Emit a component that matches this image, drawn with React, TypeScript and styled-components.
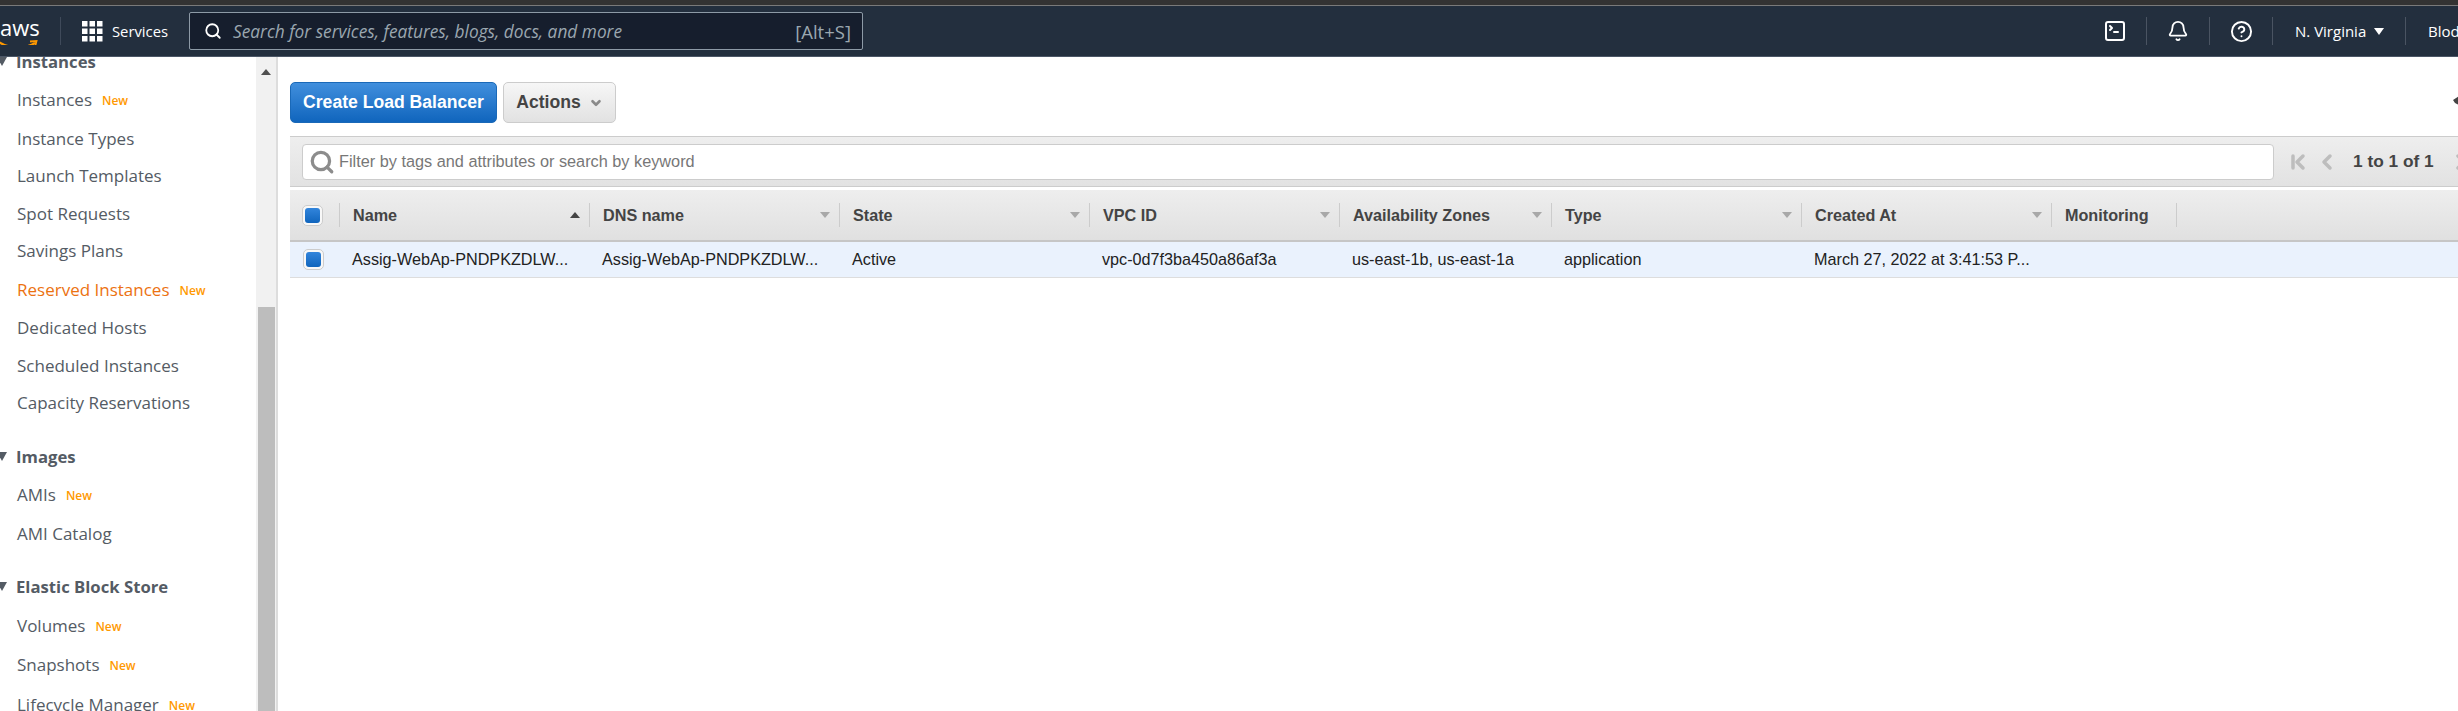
import React from 'react'
import styled, { createGlobalStyle } from 'styled-components'
import { Bell, ChevronDown, ChevronFirst, ChevronLeft, ChevronRight, CircleHelp, Search, SquareTerminal } from 'lucide-react'

const Global = createGlobalStyle`
  html, body {
    margin: 0;
    padding: 0;
    height: 711px;
    overflow: hidden;
    background: #fff;
  }
  * { box-sizing: border-box; }
`

interface INavItem {
  label: string;
  isNew?: boolean;
  active?: boolean;
}

interface INavGroup {
  title: string;
  items: INavItem[];
}

const groups: INavGroup[] = [
  {
    title: 'Instances',
    items: [
      { label: 'Instances', isNew: true },
      { label: 'Instance Types' },
      { label: 'Launch Templates' },
      { label: 'Spot Requests' },
      { label: 'Savings Plans' },
      { label: 'Reserved Instances', isNew: true, active: true },
      { label: 'Dedicated Hosts' },
      { label: 'Scheduled Instances' },
      { label: 'Capacity Reservations' },
    ],
  },
  {
    title: 'Images',
    items: [{ label: 'AMIs', isNew: true }, { label: 'AMI Catalog' }],
  },
  {
    title: 'Elastic Block Store',
    items: [
      { label: 'Volumes', isNew: true },
      { label: 'Snapshots', isNew: true },
      { label: 'Lifecycle Manager', isNew: true },
    ],
  },
]

const columns = [
  { title: 'Name', value: 'Assig-WebAp-PNDPKZDLW...', width: 250, sorted: true },
  { title: 'DNS name', value: 'Assig-WebAp-PNDPKZDLW...', width: 250 },
  { title: 'State', value: 'Active', width: 250 },
  { title: 'VPC ID', value: 'vpc-0d7f3ba450a86af3a', width: 250 },
  { title: 'Availability Zones', value: 'us-east-1b, us-east-1a', width: 212 },
  { title: 'Type', value: 'application', width: 250 },
  { title: 'Created At', value: 'March 27, 2022 at 3:41:53 P...', width: 250 },
  { title: 'Monitoring', value: '', width: 125, plain: true },
]

const GridIcon = () => (
  <svg width="21" height="21" viewBox="0 0 21 21" fill="#fff">
    {[0, 7.5, 15].map((y) =>
      [0, 7.5, 15].map((x) => <rect key={`${x}-${y}`} x={x} y={y} width="5.5" height="5.5" />)
    )}
  </svg>
)

const Swoosh = () => (
  <svg width="42" height="12" viewBox="0 0 42 12" fill="none">
    <path d="M1 2.5C11 9.5 27 10.5 38 4" stroke="#ff9900" strokeWidth="2.2" />
    <path d="M33 2.5L39.5 2L38 8" stroke="#ff9900" strokeWidth="1.8" />
  </svg>
)

const PinIcon = () => (
  <svg width="18" height="20" viewBox="0 0 18 20" fill="#444">
    <path d="M2 7L8 3L8 0L14 0L14 20L9 20L8 12L4 10Z" />
  </svg>
)

const App = () => {
  return (
    <Page>
      <Global />
      <TopStrip />
      <Nav>
        <LogoSlot>
          <LogoText>aws</LogoText>
          <SwooshWrap>
            <Swoosh />
          </SwooshWrap>
        </LogoSlot>
        <ServicesLink>
          <GridIcon />
          <span>Services</span>
        </ServicesLink>
        <SearchBox>
          <Search size={18} color="#fff" strokeWidth={2.4} />
          <SearchHint>Search for services, features, blogs, docs, and more</SearchHint>
          <SearchKey>[Alt+S]</SearchKey>
        </SearchBox>
        <NavRight>
          <NavIconCell>
            <SquareTerminal size={24} color="#fff" strokeWidth={2} />
          </NavIconCell>
          <NavIconCell>
            <Bell size={22} color="#fff" strokeWidth={2} />
          </NavIconCell>
          <NavIconCell>
            <CircleHelp size={23} color="#fff" strokeWidth={2} />
          </NavIconCell>
          <RegionCell>
            N. Virginia
            <RegionCaret />
          </RegionCell>
          <AccountCell>Blod</AccountCell>
        </NavRight>
      </Nav>
      <Body>
        <Sidebar>
          <SideList>
            {groups.map((group) => (
              <SideGroup key={group.title}>
                <SideHeading>
                  <HeadingCaret />
                  {group.title}
                </SideHeading>
                {group.items.map((item) => (
                  <SideItem key={item.label} $active={item.active} $tall={item.isNew}>
                    {item.label}
                    {item.isNew && <NewBadge>New</NewBadge>}
                  </SideItem>
                ))}
              </SideGroup>
            ))}
          </SideList>
          <ScrollTrack>
            <ScrollUp />
            <ScrollThumb />
          </ScrollTrack>
        </Sidebar>
        <Main>
          <ActionRow>
            <PrimaryButton>Create Load Balancer</PrimaryButton>
            <ActionsButton>
              Actions
              <ChevronDown size={14} color="#8a8a8a" strokeWidth={4.5} />
            </ActionsButton>
            <PinSlot>
              <PinIcon />
            </PinSlot>
          </ActionRow>
          <FilterBar>
            <FilterInput>
              <Search size={26} color="#8c8c8c" strokeWidth={3} />
              <FilterHint>Filter by tags and attributes or search by keyword</FilterHint>
            </FilterInput>
            <Pager>
              <ChevronFirst size={24} color="#bdbdbd" strokeWidth={3.5} />
              <ChevronLeft size={24} color="#bdbdbd" strokeWidth={3.5} />
              <PagerText>1 to 1 of 1</PagerText>
              <ChevronRight size={24} color="#bdbdbd" strokeWidth={3.5} />
            </Pager>
          </FilterBar>
          <TableHead>
            <CheckCell>
              <CheckBox />
            </CheckCell>
            {columns.map((col) => (
              <HeadCell key={col.title} $width={col.width}>
                {col.title}
                {!col.plain && <SortCaret $up={col.sorted} />}
              </HeadCell>
            ))}
          </TableHead>
          <TableRow>
            <CheckCell>
              <CheckBox />
            </CheckCell>
            {columns.map((col) => (
              <RowCell key={col.title} $width={col.width}>
                {col.value}
              </RowCell>
            ))}
          </TableRow>
        </Main>
      </Body>
    </Page>
  )
}

const Page = styled.div`
  width: 2458px;
  height: 711px;
  overflow: hidden;
  display: flex;
  flex-direction: column;
  font-family: 'Liberation Sans', Arial, sans-serif;
`

const TopStrip = styled.div`
  height: 6px;
  flex: none;
  background: #333;
  border-bottom: 1px solid #7a7a7a;
`

const Nav = styled.header`
  height: 51px;
  flex: none;
  display: flex;
  align-items: center;
  background: #232f3e;
  border-bottom: 1px solid #4b5666;
  font-family: 'Open Sans', sans-serif;
  color: #fff;
`

const LogoSlot = styled.div`
  width: 61px;
  height: 28px;
  flex: none;
  border-right: 1px solid #3f4a5a;
  overflow: hidden;
  position: relative;
`

const LogoText = styled.div`
  font-size: 22px;
  line-height: 22px;
  margin-top: -1px;
`

const SwooshWrap = styled.div`
  position: absolute;
  left: -3px;
  top: 17px;
`

const ServicesLink = styled.div`
  display: flex;
  align-items: center;
  gap: 9px;
  margin-left: 21px;
  width: 107px;
  font-size: 14.8px;
  flex: none;
`

const SearchBox = styled.div`
  width: 674px;
  height: 38px;
  flex: none;
  display: flex;
  align-items: center;
  padding: 0 11px 0 14px;
  background: #161e2d;
  border: 1px solid #8d9aa6;
  border-radius: 2px;
  font-size: 17.3px;
`

const SearchHint = styled.span`
  margin-left: 11px;
  font-style: italic;
  color: #9ba7b0;
  flex: 1;
`

const SearchKey = styled.span`
  color: #9ba7b0;
  font-size: 18.5px;
`

const NavRight = styled.div`
  margin-left: auto;
  display: flex;
  align-items: center;
  flex: none;
`

const NavIconCell = styled.div`
  width: 63px;
  height: 28px;
  display: flex;
  align-items: center;
  justify-content: center;
  border-right: 1px solid #4a5462;
`

const RegionCell = styled.div`
  width: 133px;
  height: 28px;
  padding-left: 22px;
  display: flex;
  align-items: center;
  gap: 8px;
  font-size: 15px;
  border-right: 1px solid #4a5462;
`

const RegionCaret = styled.span`
  width: 0;
  height: 0;
  border-left: 5px solid transparent;
  border-right: 5px solid transparent;
  border-top: 7px solid #fff;
`

const AccountCell = styled.div`
  width: 52px;
  padding-left: 22px;
  font-size: 15px;
  overflow: hidden;
  white-space: nowrap;
`

const Body = styled.div`
  flex: 1;
  display: flex;
  min-height: 0;
`

const Sidebar = styled.aside`
  width: 278px;
  flex: none;
  display: flex;
  border-right: 2px solid #ddd;
  overflow: hidden;
`

const SideList = styled.nav`
  width: 256px;
  flex: none;
  margin-top: -15px;
  font-family: 'Open Sans', sans-serif;
  font-size: 17px;
  color: #545b64;
`

const SideGroup = styled.div`
  margin-bottom: 15.5px;
`

const SideHeading = styled.div`
  height: 38px;
  display: flex;
  align-items: center;
  gap: 9px;
  margin-left: -3px;
  font-size: 16.7px;
  font-weight: 700;
`

const HeadingCaret = styled.span`
  width: 0;
  height: 0;
  border-left: 5px solid transparent;
  border-right: 5px solid transparent;
  border-top: 9px solid #545b64;
`

const SideItem = styled.div<{ $active?: boolean; $tall?: boolean }>`
  height: ${({ $tall }) => ($tall ? '39.5px' : '37.5px')};
  padding-left: 17px;
  display: flex;
  align-items: center;
  color: ${({ $active }) => ($active ? '#ec7211' : '#545b64')};
`

const NewBadge = styled.span`
  margin-left: 10px;
  margin-top: 2px;
  font-size: 12px;
  font-weight: 600;
  color: #ff9900;
`

const ScrollTrack = styled.div`
  width: 20px;
  flex: none;
  background: #f1f1f1;
  display: flex;
  flex-direction: column;
  align-items: center;
`

const ScrollUp = styled.span`
  margin-top: 12px;
  width: 0;
  height: 0;
  border-left: 5px solid transparent;
  border-right: 5px solid transparent;
  border-bottom: 6px solid #505050;
`

const ScrollThumb = styled.div`
  margin-top: 232px;
  width: 17px;
  flex: 1;
  background: #bdbdbd;
`

const Main = styled.main`
  flex: 1;
  min-width: 0;
  padding: 25px 0 0 12px;
`

const ActionRow = styled.div`
  display: flex;
  align-items: center;
  gap: 6px;
  height: 41px;
`

const PrimaryButton = styled.button`
  width: 207px;
  height: 41px;
  border: 1px solid #1a69b8;
  border-radius: 5px;
  background: linear-gradient(#418fdd, #1065bd);
  color: #fff;
  font-family: inherit;
  font-size: 17.6px;
  font-weight: 700;
  padding: 0;
`

const ActionsButton = styled.button`
  width: 113px;
  height: 41px;
  display: flex;
  align-items: center;
  justify-content: center;
  gap: 8px;
  border: 1px solid #ccc;
  border-radius: 5px;
  background: linear-gradient(#f6f6f6, #e2e2e2);
  color: #444;
  font-family: inherit;
  font-size: 17.6px;
  font-weight: 700;
  padding: 0;
`

const PinSlot = styled.div`
  margin-left: auto;
  margin-right: -11px;
  display: flex;
`

const FilterBar = styled.div`
  margin-top: 13px;
  height: 51px;
  display: flex;
  align-items: center;
  padding-left: 12px;
  border-top: 1px solid #ccc;
  border-bottom: 1px solid #ccc;
  background: linear-gradient(#eee, #e2e2e2);
`

const FilterInput = styled.div`
  width: 1972px;
  height: 36px;
  flex: none;
  display: flex;
  align-items: center;
  padding-left: 6px;
  gap: 4px;
  background: #fff;
  border: 1px solid #ccc;
  border-radius: 4px;
`

const FilterHint = styled.span`
  font-size: 16.3px;
  color: #777;
`

const Pager = styled.div`
  margin-left: 12px;
  display: flex;
  align-items: center;
  flex: none;
  gap: 5px;
`

const PagerText = styled.span`
  margin: 0 10px 0 9px;
  font-size: 17.3px;
  font-weight: 700;
  color: #444;
`

const TableHead = styled.div`
  margin-top: 3px;
  height: 52px;
  display: flex;
  align-items: center;
  border-bottom: 2px solid #c6c6c6;
  background: linear-gradient(#eee, #e0e0e0);
`

const CheckCell = styled.div`
  width: 50px;
  flex: none;
  height: 24px;
  display: flex;
  align-items: center;
  padding-left: 12px;
  border-right: 1px solid #ccc;
`

const CheckBox = styled.span`
  width: 21px;
  height: 21px;
  padding: 2px;
  border: 1px solid #ccc;
  border-radius: 5px;
  background: #f8f8f8;
  display: block;
  &::before {
    content: '';
    display: block;
    width: 100%;
    height: 100%;
    border-radius: 3px;
    background: linear-gradient(#3285dc, #1065bd);
  }
`

const HeadCell = styled.div<{ $width: number }>`
  width: ${({ $width }) => $width}px;
  flex: none;
  height: 24px;
  display: flex;
  align-items: center;
  justify-content: space-between;
  padding: 0 9px 0 13px;
  border-right: 1px solid #ccc;
  font-size: 16.2px;
  font-weight: 700;
  color: #444;
`

const SortCaret = styled.span<{ $up?: boolean }>`
  width: 0;
  height: 0;
  border-left: 5px solid transparent;
  border-right: 5px solid transparent;
  ${({ $up }) => ($up ? 'border-bottom: 6px solid #444;' : 'border-top: 6px solid #a8a8a8;')}
`

const TableRow = styled.div`
  height: 36px;
  display: flex;
  align-items: center;
  background: #eaf2fd;
  border-bottom: 1px solid #ddd;

  ${CheckCell} {
    border-right: none;
    padding-left: 13px;
  }
`

const RowCell = styled.div<{ $width: number }>`
  width: ${({ $width }) => $width}px;
  flex: none;
  padding-left: 12px;
  font-size: 16.2px;
  color: #222;
  white-space: nowrap;
  overflow: hidden;
`

export default App
